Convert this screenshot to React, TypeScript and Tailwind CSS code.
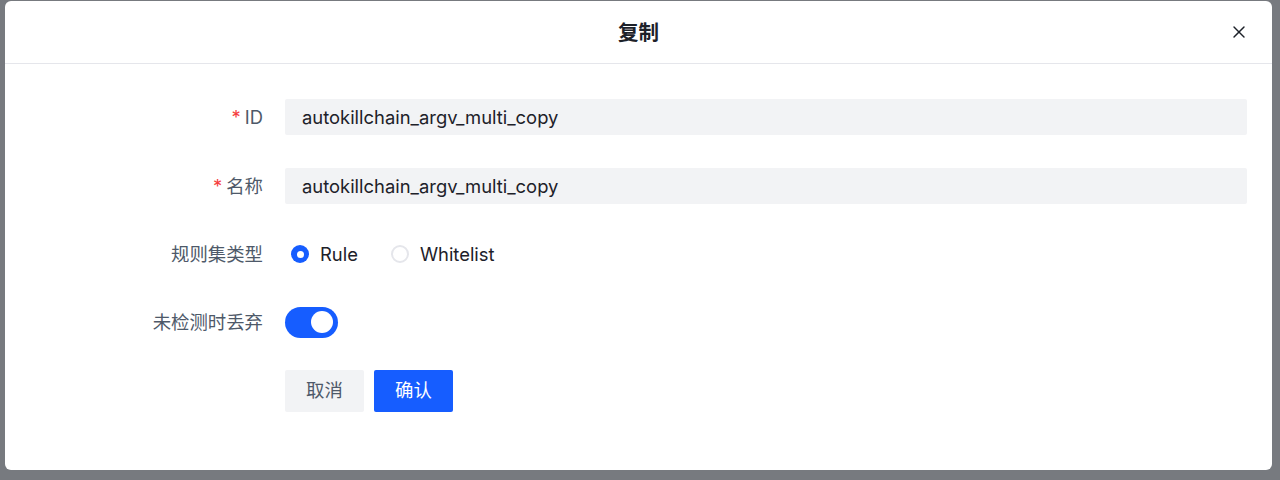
import { X } from 'lucide-react';

const font = { fontFamily: 'Inter, "Noto Sans CJK SC", sans-serif' };

function Label({ text, required }: { text: string; required?: boolean }) {
  return (
    <div className="w-[258px] shrink-0 pt-[2px] text-right text-[18.4px] text-[#4e5969]">
      {required && <span className="mr-[4px] text-[#f53f3f]">*</span>}
      {text}
    </div>
  );
}

export default function App() {
  return (
    <div className="h-[480px] w-[1280px] overflow-hidden bg-[#777a7f] pl-[5px] pt-[1px]" style={font}>
      <div className="h-[469px] w-[1267px] rounded-[6px] bg-white">
        {/* header */}
        <div className="relative flex h-[63px] items-center justify-center border-b border-[#e5e6eb] pt-[3px]">
          <span className="text-[20.5px] font-semibold text-[#1d2129]">复制</span>
          <X className="absolute right-[23px] top-[21px] h-[20px] w-[20px] text-[#1d2129]" strokeWidth={1.7} />
        </div>

        {/* form */}
        <div className="pr-[25px] pt-[35px]">
          <div className="flex h-9 items-center">
            <Label text="ID" required />
            <div className="ml-[22px] flex h-9 flex-1 items-center rounded-[2px] bg-[#f2f3f5] px-[17px] pt-[1px] text-[18.4px] text-[#1d2129]">
              autokillchain_argv_multi_copy
            </div>
          </div>

          <div className="mt-[33px] flex h-9 items-center">
            <Label text="名称" required />
            <div className="ml-[22px] flex h-9 flex-1 items-center rounded-[2px] bg-[#f2f3f5] px-[17px] pt-[1px] text-[18.4px] text-[#1d2129]">
              autokillchain_argv_multi_copy
            </div>
          </div>

          <div className="mt-[32px] flex h-9 items-center">
            <Label text="规则集类型" />
            <div className="ml-[22px] flex items-center pt-[1px] text-[18.4px] text-[#1d2129]">
              <span className="ml-[6px] flex h-[18px] w-[18px] items-center justify-center rounded-full bg-[#165dff]">
                <span className="h-[7px] w-[7px] rounded-full bg-white" />
              </span>
              <span className="ml-[11px]">Rule</span>
              <span className="ml-[33px] h-[18px] w-[18px] rounded-full border-2 border-[#e5e6eb]" />
              <span className="ml-[11px]">Whitelist</span>
            </div>
          </div>

          <div className="mt-[32px] flex h-9 items-center">
            <Label text="未检测时丢弃" />
            <div className="ml-[22px] flex h-[31px] w-[53px] items-center justify-end rounded-full bg-[#165dff] pr-[5px]">
              <span className="h-[22px] w-[22px] rounded-full bg-white" />
            </div>
          </div>

          <div className="ml-[280px] mt-[30px] flex gap-[10px] text-[18.4px]">
            <button className="h-[42px] w-[79px] rounded-[2px] bg-[#f2f3f5] text-[#4e5969]">取消</button>
            <button className="h-[42px] w-[79px] rounded-[2px] bg-[#165dff] text-white">确认</button>
          </div>
        </div>
      </div>
    </div>
  );
}
